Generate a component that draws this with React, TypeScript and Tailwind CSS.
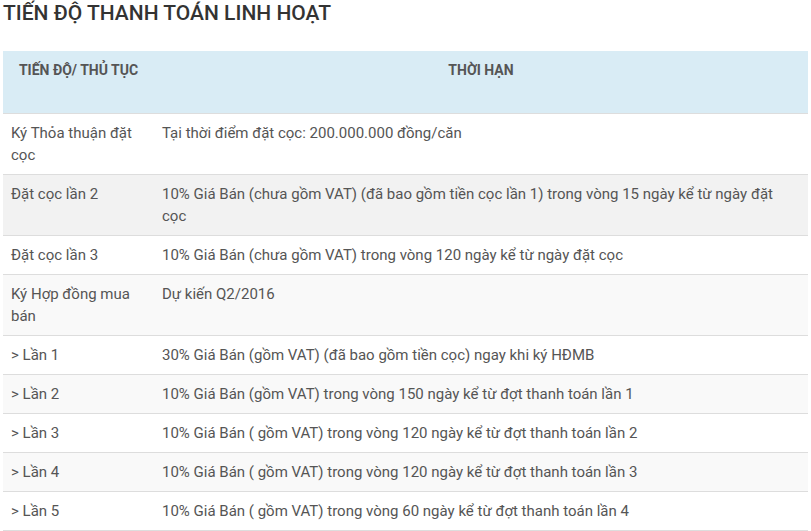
import React from 'react';

interface Row {
  step: string;
  term: string;
  bg: string;
}

const rows: Row[] = [
  { step: 'Ký Thỏa thuận đặt cọc', term: 'Tại thời điểm đặt cọc: 200.000.000 đồng/căn', bg: 'bg-white' },
  { step: 'Đặt cọc lần 2', term: '10% Giá Bán (chưa gồm VAT) (đã bao gồm tiền cọc lần 1) trong vòng 15 ngày kể từ ngày đặt cọc', bg: 'bg-[#f2f2f2]' },
  { step: 'Đặt cọc lần 3', term: '10% Giá Bán (chưa gồm VAT) trong vòng 120 ngày kể từ ngày đặt cọc', bg: 'bg-white' },
  { step: 'Ký Hợp đồng mua bán', term: 'Dự kiến Q2/2016', bg: 'bg-[#f9f9f9]' },
  { step: '> Lần 1', term: '30% Giá Bán (gồm VAT) (đã bao gồm tiền cọc) ngay khi ký HĐMB', bg: 'bg-white' },
  { step: '> Lần 2', term: '10% Giá Bán (gồm VAT) trong vòng 150 ngày kể từ đợt thanh toán lần 1', bg: 'bg-[#f9f9f9]' },
  { step: '> Lần 3', term: '10% Giá Bán ( gồm VAT) trong vòng 120 ngày kể từ đợt thanh toán lần 2', bg: 'bg-white' },
  { step: '> Lần 4', term: '10% Giá Bán ( gồm VAT) trong vòng 120 ngày kể từ đợt thanh toán lần 3', bg: 'bg-[#f9f9f9]' },
  { step: '> Lần 5', term: '10% Giá Bán ( gồm VAT) trong vòng 60 ngày kể từ đợt thanh toán lần 4', bg: 'bg-white' },
];

const App: React.FC = () => {
  return (
    <div className="min-h-screen bg-white pl-[3px] pr-[3px] font-['Roboto',sans-serif] text-[#555]">
      <h2 className="pt-[1px] text-[21px] leading-[24px] font-medium text-[#333]">TIẾN ĐỘ THANH TOÁN LINH HOẠT</h2>

      <table className="mt-[26px] w-[805px] border-collapse text-[15px] leading-[22px]">
        <thead>
          {/* header has extra space below the labels */}
          <tr className="bg-[#d9ecf5]">
            <th className="h-[62px] w-[151px] border-b border-[#ddd] px-2 pt-[8px] pb-[30px] text-center align-top text-[14px] font-bold text-[#555]">
              TIẾN ĐỘ/ THỦ TỤC
            </th>
            <th className="h-[62px] border-b border-[#ddd] px-2 pt-[8px] pb-[30px] text-center align-top text-[14px] font-bold text-[#555]">
              THỜI HẠN
            </th>
          </tr>
        </thead>
        <tbody>
          {rows.map((row, i) => (
            <tr key={i} className={row.bg}>
              <td className="border-b border-[#ddd] px-2 py-2 align-top">{row.step}</td>
              <td className="border-b border-[#ddd] px-2 py-2 align-top">{row.term}</td>
            </tr>
          ))}
        </tbody>
      </table>
    </div>
  );
};

export default App;
